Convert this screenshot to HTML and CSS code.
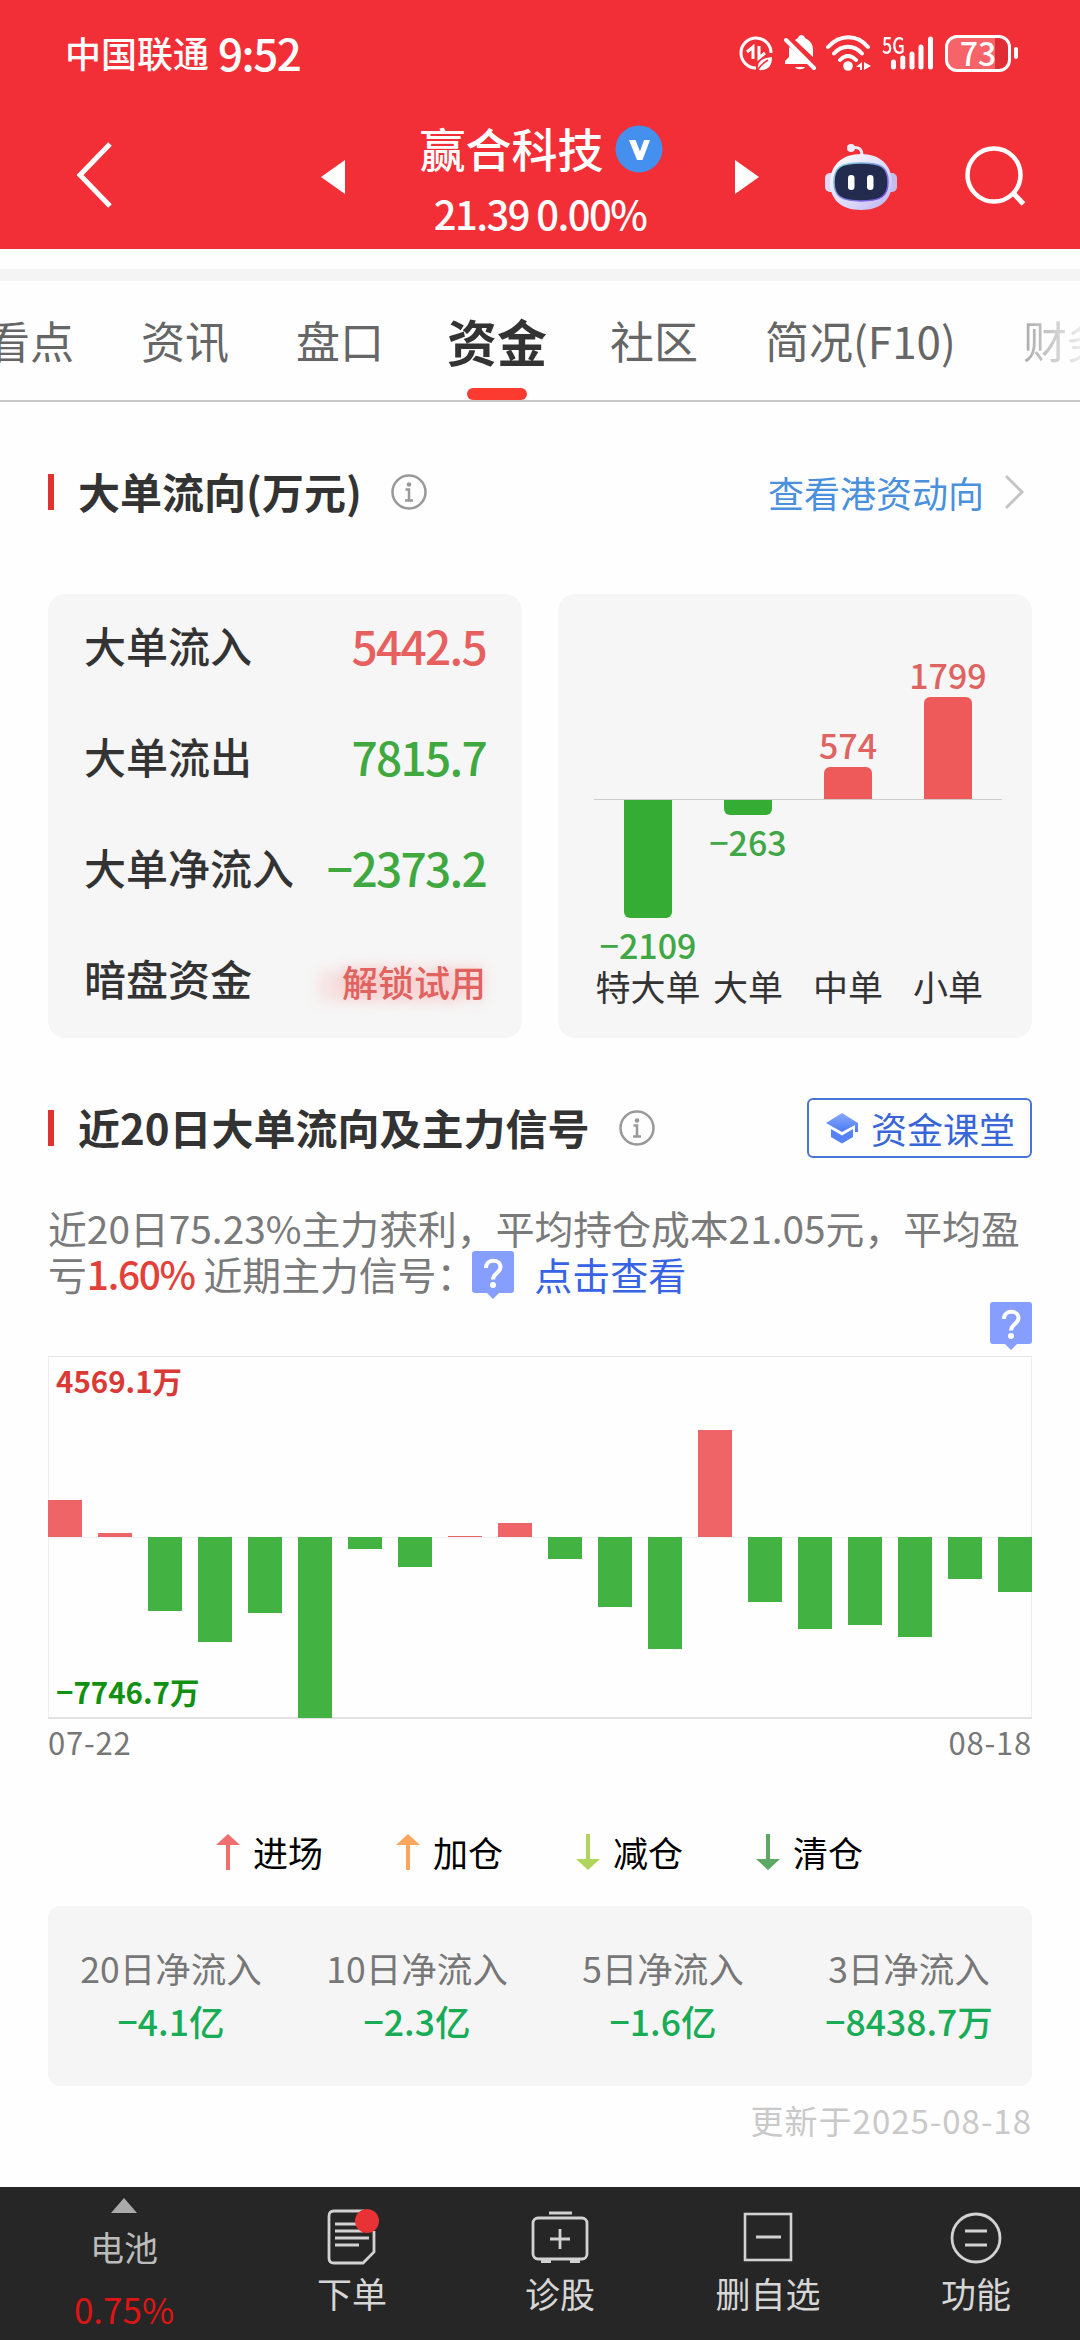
FILE: index.html
```html
<!DOCTYPE html>
<html lang="zh-CN">
<head>
    <meta charset="UTF-8">
    <meta name="viewport" content="width=device-width, initial-scale=1.0">
    <title>赢合科技 - 资金</title>
    <link rel="stylesheet" href="styles.css">
</head>
<body>
    <!-- Header -->
    <header class="header">
        <div class="status">
            <span class="carrier">中国联通</span>
            <span class="clock">9:52</span>
            <div class="status-icons">
                <svg width="34" height="38" viewBox="0 0 34 38" fill="none" stroke="#fff" stroke-width="3">
                    <path d="M32 19A15 15 0 1 0 17 34"/>
                    <path d="M8 18l6-5v12M26 19l-6 5V12" />
                    <path d="M19 36c-1-9 4-12 14-13c0 9-4 14-14 13z" fill="#fff" stroke="none"/>
                    <path d="M18 37c3-5 6-8 11-11" stroke="#f22f37" stroke-width="1.500"/>
                </svg>
                <svg class="bell" width="32" height="38" viewBox="0 0 32 38" fill="#fff">
                    <path d="M6 13L24 30H1v-3l4-4V14zM11 6c1-1 2-1 3-2c1-4 6-4 7 0c6 3 8 7 8 12v7z"/>
                    <path d="M11 33h10c-1 3-9 3-10 0z"/>
                    <path d="M2 6l28 28" stroke="#fff" stroke-width="4" stroke-linecap="round"/>
                </svg>
                <svg class="wifi" width="46" height="38" viewBox="0 0 46 38" fill="none" stroke="#fff" stroke-width="4" stroke-linecap="round">
                    <path d="M2 13c12-13 29-13 40 0M8 19.500c8-9 20-9 28 0M14 26c5-5.500 11-5.500 16 0"/>
                    <circle cx="22" cy="32" r="4.800" fill="#fff" stroke="none"/>
                    <path d="M30 33l6-5v8h-2v-3zM38 28v8l7-4z" fill="#fff" stroke="none"/>
                </svg>
                <div class="cell">
                    <span class="net">5G</span>
                    <svg width="44" height="38" viewBox="0 0 44 38" stroke="#fff" stroke-width="5" stroke-linecap="round">
                        <path d="M3.500 28v5M12.800 24v9M22 20v13M31 13v20M40.500 5v28"/>
                    </svg>
                </div>
                <div class="battery"><span>73</span></div>
                <div class="nub"></div>
            </div>
        </div>
        <div class="titlebar">
            <svg class="back" width="40" height="68" viewBox="0 0 40 68" fill="none" stroke="#fff" stroke-width="5"><path d="M35 3L5 34l30 31"/></svg>
            <svg class="arrow" width="24" height="34" viewBox="0 0 24 34" fill="#fff"><path d="M24 0v34L0 17z"/></svg>
            <div class="stock">
                <div class="stock-name"><span>赢合科技</span>
                    <svg width="48" height="48" viewBox="0 0 48 48"><circle cx="24" cy="24" r="23.500" fill="#4590ee"/><path d="M14 15h6.500l4.500 11.500l4-11.500h6l-7.500 20h-5.500z" fill="#fff"/></svg>
                </div>
                <div class="stock-price">21.39 0.00%</div>
            </div>
            <svg class="arrow" width="24" height="34" viewBox="0 0 24 34" fill="#fff"><path d="M0 0v34l24-17z"/></svg>
            <div class="tools">
                <svg width="72" height="68" viewBox="0 0 72 68">
                    <defs>
                        <linearGradient id="head" x1="0" y1="0" x2="1" y2="1"><stop offset="0" stop-color="#fff"/><stop offset="0.600" stop-color="#dcd9fb"/><stop offset="1" stop-color="#b9b0ee"/></linearGradient>
                        <linearGradient id="rim" x1="0" y1="0" x2="1" y2="1"><stop offset="0" stop-color="#7fd8e0"/><stop offset="1" stop-color="#7b3fe0"/></linearGradient>
                    </defs>
                    <path d="M26 5c8-2 11 1 11 8" fill="none" stroke="#eeeafc" stroke-width="3"/>
                    <circle cx="26" cy="5" r="4" fill="#f0edfb"/>
                    <rect x="0" y="30" width="11" height="19" rx="5" fill="#dfdaf6"/>
                    <rect x="61" y="30" width="11" height="19" rx="5" fill="#c3bdf0"/>
                    <path d="M36 11c19 0 31 11 31 29c0 16-11 27-31 27S5 56 5 40C5 22 17 11 36 11z" fill="url(#head)"/>
                    <path d="M36 20c20 0 27 4 27 19c0 14-7 19-27 19S9 53 9 39c0-15 7-19 27-19z" fill="#232c4f" stroke="url(#rim)" stroke-width="1.500"/>
                    <rect x="23" y="32" width="6.500" height="15" rx="3.200" fill="#fff"/>
                    <rect x="42" y="32" width="6.500" height="15" rx="3.200" fill="#fff"/>
                </svg>
                <svg width="62" height="62" viewBox="0 0 62 62" fill="none" stroke="#fff" stroke-width="4.500"><circle cx="29" cy="29" r="26.500"/><path d="M48 47l10.500 11" stroke-width="5"/></svg>
            </div>
        </div>
    </header>

    <!-- Tabs -->
    <nav class="tabs">
        <span>看点</span>
        <span>资讯</span>
        <span>盘口</span>
        <span class="active">资金</span>
        <span>社区</span>
        <span>简况(F10)</span>
        <span class="faded">财务</span>
    </nav>

    <main class="content">
        <!-- Order flow -->
        <div class="section-head">
            <h2>大单流向(万元)</h2>
            <svg class="info" width="36" height="36" viewBox="0 0 36 36" fill="none" stroke="#999" stroke-width="2.500"><circle cx="18" cy="18" r="16.500"/><path d="M14.500 15.500H18V26M14 26.500h8"/><circle cx="18" cy="10.500" r="2.300" fill="#999" stroke="none"/></svg>
            <a class="more">查看港资动向
                <svg width="22" height="36" viewBox="0 0 22 36" fill="none" stroke="#c4c4c4" stroke-width="3"><path d="M2 2l16 16L2 34"/></svg>
            </a>
        </div>
        <div class="cards">
            <div class="card flow-list">
                <div class="flow"><span>大单流入</span><b class="red">5442.5</b></div>
                <div class="flow"><span>大单流出</span><b class="green">7815.7</b></div>
                <div class="flow"><span>大单净流入</span><b class="green">−2373.2</b></div>
                <div class="flow"><span>暗盘资金</span><em class="unlock">解锁试用</em></div>
            </div>
            <div class="card orders">
                <div class="order">
                    <div class="above"></div>
                    <div class="below"><i class="bar" style="height: 118px"></i><b>−2109</b></div>
                    <span>特大单</span>
                </div>
                <div class="order">
                    <div class="above"></div>
                    <div class="below"><i class="bar" style="height: 15px"></i><b>−263</b></div>
                    <span>大单</span>
                </div>
                <div class="order">
                    <div class="above"><b>574</b><i class="bar" style="height: 32px"></i></div>
                    <div class="below"></div>
                    <span>中单</span>
                </div>
                <div class="order">
                    <div class="above"><b>1799</b><i class="bar" style="height: 102px"></i></div>
                    <div class="below"></div>
                    <span>小单</span>
                </div>
            </div>
        </div>

        <!-- Last 20 days -->
        <div class="section-head second">
            <h2>近20日大单流向及主力信号</h2>
            <svg class="info" width="36" height="36" viewBox="0 0 36 36" fill="none" stroke="#999" stroke-width="2.500"><circle cx="18" cy="18" r="16.500"/><path d="M14.500 15.500H18V26M14 26.500h8"/><circle cx="18" cy="10.500" r="2.300" fill="#999" stroke="none"/></svg>
            <a class="lesson">
                <svg width="34" height="32" viewBox="0 0 34 32">
                    <defs><linearGradient id="cap" x1="0" y1="0" x2="0" y2="1"><stop offset="0" stop-color="#8aa9fb"/><stop offset="1" stop-color="#4a7bf5"/></linearGradient></defs>
                    <path d="M17 1L1 11l16 9l13-7v7h3v-9z" fill="url(#cap)"/>
                    <path d="M6 17l11 6.500L28 17v8l-11 6.500L6 25z" fill="#5583f6"/>
                </svg>
                资金课堂
            </a>
        </div>
        <p class="summary">近20日75.23%主力获利，平均持仓成本21.05元，平均盈<br>亏<b>1.60%</b> 近期主力信号：<svg class="bubble" width="42" height="48" viewBox="0 0 42 48"><path d="M3 0h36q3 0 3 3v36q0 3-3 3H27l-6 6-6-6H3q-3 0-3-3V3q0-3 3-3z" fill="#869fff"/><path d="M14 17c0-10 14.500-9 14.500-1c0 6-7.500 6-7.500 12.500" fill="none" stroke="#fff" stroke-width="4"/><circle cx="21" cy="34" r="3" fill="#fff"/></svg><a>点击查看</a></p>
        <div class="marker">
            <svg width="42" height="48" viewBox="0 0 42 48"><path d="M3 0h36q3 0 3 3v36q0 3-3 3H27l-6 6-6-6H3q-3 0-3-3V3q0-3 3-3z" fill="#869fff"/><path d="M14 17c0-10 14.500-9 14.500-1c0 6-7.500 6-7.500 12.500" fill="none" stroke="#fff" stroke-width="4"/><circle cx="21" cy="34" r="3" fill="#fff"/></svg>
        </div>
        <div class="chart">
            <span class="max">4569.1万</span>
            <span class="min">−7746.7万</span>
            <i class="up" style="height: 37px"></i>
            <i class="up" style="height: 4px"></i>
            <i class="down" style="height: 74px"></i>
            <i class="down" style="height: 105px"></i>
            <i class="down" style="height: 76px"></i>
            <i class="down" style="height: 181px"></i>
            <i class="down" style="height: 12px"></i>
            <i class="down" style="height: 30px"></i>
            <i class="up" style="height: 1px"></i>
            <i class="up" style="height: 14px"></i>
            <i class="down" style="height: 22px"></i>
            <i class="down" style="height: 70px"></i>
            <i class="down" style="height: 112px"></i>
            <i class="up" style="height: 107px"></i>
            <i class="down" style="height: 65px"></i>
            <i class="down" style="height: 92px"></i>
            <i class="down" style="height: 88px"></i>
            <i class="down" style="height: 100px"></i>
            <i class="down" style="height: 42px"></i>
            <i class="down" style="height: 55px"></i>
        </div>
        <div class="dates"><span>07-22</span><span>08-18</span></div>

        <div class="legend">
            <span class="enter"><svg width="24" height="36" viewBox="0 0 24 36"><path d="M12 0l12 11H14v25h-4V11H0z"/></svg>进场</span>
            <span class="add"><svg width="24" height="36" viewBox="0 0 24 36"><path d="M12 0l12 11H14v25h-4V11H0z"/></svg>加仓</span>
            <span class="reduce"><svg width="24" height="36" viewBox="0 0 24 36"><path d="M12 36l12-11H14V0h-4v25H0z"/></svg>减仓</span>
            <span class="clear"><svg width="24" height="36" viewBox="0 0 24 36"><path d="M12 36l12-11H14V0h-4v25H0z"/></svg>清仓</span>
        </div>

        <div class="totals">
            <div>20日净流入<b>−4.1亿</b></div>
            <div>10日净流入<b>−2.3亿</b></div>
            <div>5日净流入<b>−1.6亿</b></div>
            <div>3日净流入<b>−8438.7万</b></div>
        </div>
        <div class="updated">更新于2025-08-18</div>
    </main>

    <!-- Bottom bar -->
    <footer class="bottom">
        <div class="sector">
            <svg width="26" height="15" viewBox="0 0 26 15"><path d="M13 0l13 15H0z" fill="#aaa"/></svg>
            <span>电池</span>
            <b>0.75%</b>
        </div>
        <div class="item">
            <svg width="54" height="56" viewBox="0 0 54 56" fill="none" stroke="#d2d2d2" stroke-width="2.800">
                <path d="M49 22v21L38 54H9q-5 0-5-5V7q0-5 5-5h30M10 15h24M10 22h28M10 29h34M10 36h24"/>
                <circle cx="42" cy="12" r="12" fill="#e93236" stroke="none"/>
            </svg>
            下单
        </div>
        <div class="item">
            <svg width="58" height="56" viewBox="0 0 58 56" fill="none" stroke="#d2d2d2" stroke-width="2.800">
                <rect x="2" y="9" width="54" height="41" rx="5"/><path d="M18 4h23M29 20v20M19 30h20"/><path d="M10 52h10M39 52h10" stroke-width="4"/>
            </svg>
            诊股
        </div>
        <div class="item">
            <svg width="50" height="56" viewBox="0 0 50 56" fill="none" stroke="#d2d2d2" stroke-width="2.600">
                <rect x="2" y="5" width="46" height="46"/><path d="M13 28h25" stroke-width="3"/>
            </svg>
            删自选
        </div>
        <div class="item">
            <svg width="54" height="56" viewBox="0 0 54 56" fill="none" stroke="#d2d2d2" stroke-width="2.800">
                <circle cx="27" cy="29" r="24"/><path d="M16 22h22M16 36h22"/>
            </svg>
            功能
        </div>
    </footer>
</body>
</html>
```
FILE: styles.css
```css
* {
    box-sizing: border-box;
}
body {
    margin: 0;
    width: 1080px;
    height: 2340px;
    display: flex;
    flex-direction: column;
    overflow: hidden;
    background: #fefefe;
    color: #333;
    font-family: "Noto Sans CJK SC", sans-serif;
}
svg {
    display: block;
    flex: none;
}
i, em {
    font-style: normal;
}
.header {
    height: 249px;
    background: #f22f37;
    color: #fff;
}
.status {
    height: 106px;
    padding: 0 62px 0 65px;
    display: flex;
    align-items: center;
    font-weight: 500;
}
.carrier {
    padding-bottom: 3px;
    font-size: 36px;
}
.clock {
    margin-left: 9px;
    padding-bottom: 3px;
    font-size: 44px;
    letter-spacing: -1.500px;
}
.status-icons {
    margin-left: auto;
    display: flex;
    align-items: center;
}
.bell {
    margin-left: 11px;
}
.wifi {
    margin-left: 10px;
}
.cell {
    position: relative;
    width: 52px;
    margin-left: 10px;
    display: flex;
    justify-content: flex-end;
}
.net {
    position: absolute;
    left: 0;
    top: -4px;
    font-size: 23px;
    line-height: 28px;
    transform: scaleX(.78);
    transform-origin: left;
}
.battery {
    width: 66px;
    height: 37px;
    margin-left: 11px;
    border: 3px solid #fff;
    border-radius: 12px;
    background: linear-gradient(to right, #f6646a 78%, #e02c34 78%);
    font-size: 32px;
    line-height: 28px;
    text-align: center;
}
.nub {
    width: 4px;
    height: 12px;
    margin-left: 3px;
    border-radius: 2px;
    background: #fff;
}
.titlebar {
    height: 142px;
    display: grid;
    grid-template-columns: 321px 24px 390px 24px 321px;
    align-items: center;
}
.back {
    margin: 0 0 4px 75px;
}
.stock {
    height: 142px;
    padding-top: 16px;
    text-align: center;
}
.stock-name {
    display: flex;
    justify-content: center;
    align-items: center;
    gap: 11px;
    height: 54px;
    padding-left: 2px;
    font-size: 46px;
    line-height: 54px;
}
.stock-name span {
    padding-bottom: 5px;
    font-weight: 500;
}
.stock-price {
    padding-top: 11px;
    font-size: 40px;
    line-height: 52px;
    letter-spacing: -1.600px;
    font-weight: 500;
}
.tools {
    display: flex;
    align-items: center;
    gap: 68px;
    padding-left: 66px;
}
.tabs {
    height: 133px;
    margin-top: 20px;
    border-top: 12px solid #f4f4f4;
    border-bottom: 2px solid #c9c9c9;
    display: flex;
    flex: none;
    white-space: nowrap;
    font-size: 44px;
    line-height: 118px;
    color: #666;
    gap: 67px;
}
.tabs span:first-child {
    margin-left: -14px;
}
.tabs .active {
    position: relative;
    margin: 0 -4px;
    font-size: 50px;
    font-weight: 700;
    color: #333;
}
.tabs .active::after {
    content: "";
    position: absolute;
    left: 20px;
    bottom: 0;
    width: 60px;
    height: 12px;
    border-radius: 6px;
    background: #fb3b30;
}
.tabs .faded {
    background: linear-gradient(to right, #aaa 0, #eee 60px);
    -webkit-background-clip: text;
    color: transparent;
}
.content {
    flex: 1;
    padding: 54px 48px 0;
}
.section-head {
    display: flex;
    align-items: center;
    height: 72px;
}
.section-head::before {
    content: "";
    width: 6px;
    height: 36px;
    margin-right: 24px;
    background: #e33330;
}
h2 {
    margin: 0;
    padding-bottom: 2px;
    font-size: 42px;
    line-height: 60px;
    font-weight: 700;
    white-space: nowrap;
}
.info {
    margin-left: 29px;
}
.more {
    display: flex;
    align-items: center;
    gap: 20px;
    margin-left: auto;
    padding-right: 6px;
    font-size: 36px;
    color: #4a90dd;
}
.cards {
    display: grid;
    grid-template-columns: 1fr 1fr;
    gap: 36px;
    margin-top: 66px;
}
.card {
    height: 444px;
    border-radius: 17px;
    background: #f6f6f6;
}
.flow {
    display: flex;
    justify-content: space-between;
    height: 111px;
    padding: 0 36px;
    line-height: 102px;
    font-size: 42px;
}
.flow b {
    font-size: 46px;
    font-weight: 500;
    letter-spacing: -1.700px;
}
.flow span {
    font-weight: 500;
}
.red {
    color: #e75f5e;
}
.green {
    color: #3fa93f;
}
.unlock {
    padding-top: 3px;
    font-size: 36px;
    font-weight: 500;
    color: #e06360;
    text-shadow: 0 0 14px rgba(255, 90, 90, .35), -24px 3px 14px rgba(255, 80, 80, .2);
}
.orders {
    display: grid;
    grid-template-columns: repeat(4, 100px);
    padding-left: 40px;
    font-size: 36px;
}
.order {
    display: grid;
    grid-template-rows: 206px 161px 50px;
    grid-template-columns: 100px;
    justify-items: center;
    white-space: nowrap;
}
.order span {
    line-height: 50px;
    font-size: 35px;
}
.order b {
    font-size: 34px;
    line-height: 40px;
    font-weight: 500;
}
.above, .below {
    width: 108px;
    display: flex;
    flex-direction: column;
    align-items: center;
}
.above {
    justify-content: flex-end;
    border-bottom: 1px solid #ccc;
    color: #df6361;
}
.below {
    color: #3fa745;
}
.below b {
    margin-top: 7px;
}
.above b {
    margin-bottom: 2px;
}
.bar {
    display: block;
    width: 48px;
    flex: none;
}
.above .bar {
    background: #ee5a5a;
    border-radius: 6px 6px 0 0;
}
.below .bar {
    background: #35ad35;
    border-radius: 0 0 6px 6px;
}
.second {
    margin-top: 54px;
}
.lesson {
    display: flex;
    align-items: center;
    gap: 12px;
    height: 60px;
    width: 225px;
    margin-left: auto;
    padding-left: 16px;
    border: 2px solid #4a73d6;
    border-radius: 6px;
    font-size: 36px;
    color: #3866d8;
    white-space: nowrap;
}
.summary {
    margin: 40px 0 0;
    font-size: 38.850px;
    line-height: 46px;
    height: 92px;
    color: #7a7a7a;
    white-space: nowrap;
}
.summary b {
    font-weight: 500;
    letter-spacing: -1.300px;
    color: #e24038;
}
.summary a {
    margin-left: 20px;
    font-size: 38px;
    color: #3763e4;
}
.bubble {
    display: inline-block;
    vertical-align: 1px;
    margin: -20px 0 -10px -3px;
}
.marker {
    display: flex;
    justify-content: flex-end;
    height: 54px;
    margin-top: 6px;
}
.chart {
    position: relative;
    display: flex;
    align-items: flex-start;
    gap: 16px;
    height: 363px;
    border-top: 1px solid #e6e6e6;
    border-bottom: 2px solid #e2e2e2;
    box-shadow: inset 1px 0 #eee, inset -1px 0 #eee;
    background: linear-gradient(#f0f0f0, #f0f0f0) 0 180px / 100% 1px no-repeat;
}
.up, .down {
    width: 34px;
}
.up {
    align-self: flex-end;
    margin-bottom: 180px;
    background: #ef6466;
}
.down {
    margin-top: 180px;
    background: #42b342;
}
.max, .min {
    position: absolute;
    left: 8px;
    font-size: 29.500px;
    line-height: 36px;
    font-weight: 700;
}
.max {
    top: 5px;
    color: #d93a36;
}
.min {
    bottom: 8px;
    color: #129012;
}
.dates {
    display: flex;
    justify-content: space-between;
    height: 46px;
    font-size: 31px;
    line-height: 46px;
    letter-spacing: .8px;
    color: #777;
}
.legend {
    display: flex;
    padding-left: 168px;
    margin-top: 62px;
    height: 50px;
    color: #000;
}
.legend span {
    display: flex;
    align-items: center;
    gap: 13px;
    width: 180px;
    font-size: 35px;
    line-height: 48px;
}
.enter svg {
    fill: #ef6e6e;
}
.add svg {
    fill: #fba65c;
}
.reduce svg {
    fill: #b0d55c;
}
.clear svg {
    fill: #5fa765;
}
.totals {
    display: grid;
    grid-template-columns: repeat(4, 1fr);
    height: 180px;
    margin-top: 29px;
    padding-top: 35px;
    border-radius: 12px;
    background: #f5f5f5;
    text-align: center;
    font-size: 35.500px;
    line-height: 53px;
    color: #777;
}
.totals b {
    display: block;
    font-weight: 500;
    color: #17ac55;
}
.updated {
    margin-top: 10px;
    text-align: right;
    font-size: 33px;
    line-height: 48px;
    letter-spacing: 1px;
    color: #c9c9c9;
}
.bottom {
    display: grid;
    grid-template-columns: 248px repeat(4, 208px);
    flex: none;
    height: 153px;
    background: #262626;
    color: #d6d6d6;
    font-size: 35px;
}
.sector, .item {
    display: flex;
    flex-direction: column;
    align-items: center;
}
.sector {
    padding-top: 11px;
    color: #bbb;
}
.sector span {
    margin-top: 10px;
    font-size: 34px;
    line-height: 48px;
}
.sector b {
    margin-top: 14px;
    font-size: 35px;
    line-height: 48px;
    font-weight: 400;
    color: #df1414;
}
.item {
    padding-top: 22px;
    line-height: 56px;
}
```
